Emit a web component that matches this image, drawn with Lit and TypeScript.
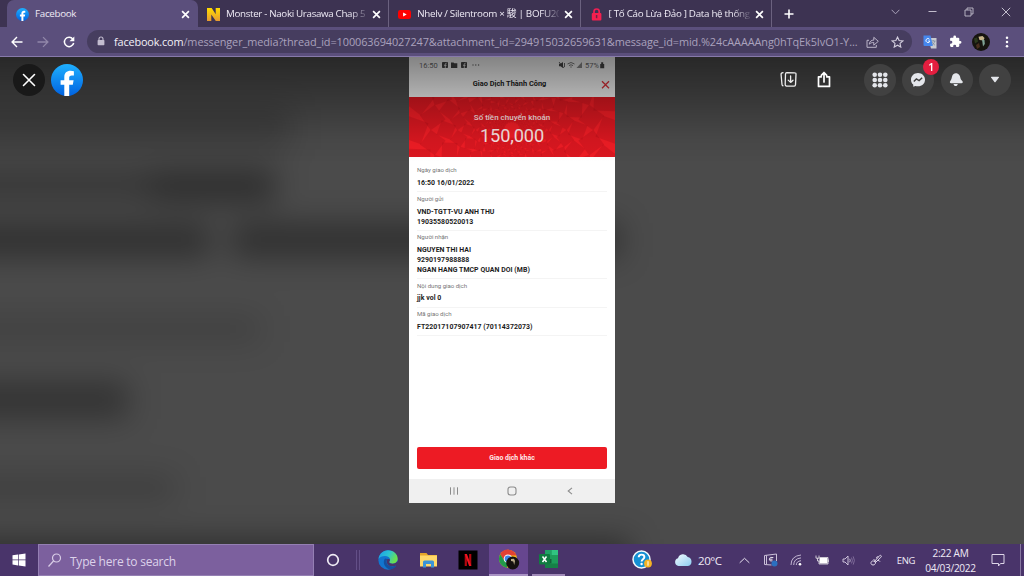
import { LitElement, html, css, svg } from "lit";
import { customElement } from "lit/decorators.js";

const fbLogo = (id: string) => html`<svg class="fill" viewBox="0 0 32 32">
  <defs><linearGradient id=${id} x1="0" y1="0" x2="0" y2="1"><stop offset="0" stop-color="#1fb0ff"/><stop offset="1" stop-color="#0062e0"/></linearGradient></defs>
  <circle cx="16" cy="16" r="16" fill="url(#${id})"/>
  <path fill="#fff" d="M13.3 32V20.8H9.6v-4.6h3.7v-3.1c0-4.2 2.5-6.3 6.2-6.3 1.3 0 2.6.2 3.4.4v4.2h-2.1c-2 0-2.6 1-2.6 2.2v2.6h4.4l-.8 4.6h-3.6V32z"/>
</svg>`;

const cross = html`<svg class="cross" viewBox="0 0 8 8"><path d="M1 1l6 6M7 1l-6 6" stroke="#fff" stroke-width="1.5"/></svg>`;

@customElement("browser-chrome")
export class BrowserChrome extends LitElement {
  static styles = css`
    :host { display: block; font-family: "Open Sans", "Noto Sans CJK JP", sans-serif; color: #eeeaf5; }
    svg { display: block; flex: none; }
    .strip { display: flex; height: 27px; background: #3d3352; padding-left: 7px; box-sizing: border-box; }
    .tab { position: relative; box-sizing: border-box; display: flex; align-items: center; width: 191.3px; padding: 1px 7px 0 9px; flex: none; }
    .tab.active { background: #5b4f7c; border-radius: 7px 7px 0 0; width: 191px; padding-right: 8px; }
    .tab.line { border-right: 1px solid #6b617f; }
    .fav { width: 13px; height: 13px; flex: none; }
    .fill { width: 100%; height: 100%; }
    .title { flex: 1; margin: 0 5px 0 6px; overflow: hidden; white-space: nowrap; font-size: 9.8px; line-height: 16px; letter-spacing: -0.3px; }
    .title.tight { letter-spacing: -0.34px; }
    .title.snug { letter-spacing: -0.3px; }
    .title.fade { mask-image: linear-gradient(90deg, #000 88%, rgba(0,0,0,.15) 100%); }
    .cross { width: 9px; height: 9px; }
    .plus { width: 10px; margin-left: 12px; align-self: center; }
    .win { display: grid; grid-template-columns: 37px 37px 36px 37px; margin-left: auto; place-items: center; padding: 0 0 4px; }
    .bar { display: flex; align-items: center; height: 30px; background: #5b4f7c; border-bottom: 1px solid #877aaa; box-sizing: border-box; }
    .nav { display: grid; grid-template-columns: 26px 26px 26px; place-items: center; padding-left: 4px; }
    .url { margin-left: 5px; width: 825px; height: 23px; border-radius: 12px; background: #463d5f; display: flex; align-items: center; box-sizing: border-box; padding: 0 0 0 9px; }
    .addr { margin-left: 8px; width: 748px; flex: none; white-space: nowrap; font-size: 10.9px; line-height: 20px; color: #aaa2bd; letter-spacing: -0.077px; }
    .addr b { color: #f3f1f8; font-weight: 400; letter-spacing: -0.15px; }
    .acts { display: grid; grid-template-columns: 25px 25px; place-items: center; margin-left: -2px; flex: none; }
    .ext { display: grid; grid-template-columns: 25px 26px 26px 25px; place-items: center; margin-left: 5px; }
  `;
  render() {
    return html`
      <div class="strip">
        <div class="tab active"><div class="fav">${fbLogo("g1")}</div><div class="title">Facebook</div>${cross}</div>
        <div class="tab line">
          <svg class="fav" viewBox="0 0 13 13"><defs><linearGradient id="n" x1="0" y1="0" x2="0" y2="1"><stop offset="0" stop-color="#ffdc00"/><stop offset="1" stop-color="#e69a32"/></linearGradient></defs><path fill="url(#n)" d="M0 0h4.7l4 6.2V0H13v13H8.8L4.3 6.5V13H0z"/></svg>
          <div class="title tight fade">Monster - Naoki Urasawa Chap 5</div>${cross}
        </div>
        <div class="tab line">
          <svg class="fav" viewBox="0 0 13 13"><rect y="2" width="13" height="9" rx="2.3" fill="#f00"/><path d="M5.1 4.4l3.6 2.1-3.6 2.1z" fill="#fff"/></svg>
          <div class="title snug fade">Nhelv / Silentroom × 駿 | BOFU20</div>${cross}
        </div>
        <div class="tab line">
          <svg class="fav" viewBox="0 0 13 13"><path d="M4 6V3.6a2.6 2.6 0 0 1 5.2 0V6" fill="none" stroke="#ef1f53" stroke-width="1.7"/><rect x="1.8" y="5" width="9.6" height="7.6" rx="1" fill="#f4204f"/><path d="M6.6 7v3.2" stroke="#6d2346" stroke-width="1.5"/></svg>
          <div class="title fade">[ Tố Cáo Lừa Đảo ] Data hệ thống</div>${cross}
        </div>
        <svg class="plus" viewBox="0 0 10 10"><path d="M5 .5v9M.5 5h9" stroke="#fff" stroke-width="1.6"/></svg>
        <div class="win">
          <svg width="9" height="6" viewBox="0 0 9 6"><path d="M.6.8l3.9 4 3.9-4" fill="none" stroke="#aaa3ba"/></svg>
          <svg width="9" height="3" viewBox="0 0 9 3"><path d="M.5 1.5h8" stroke="#c2bdcc"/></svg>
          <svg width="10" height="10" viewBox="0 0 10 10"><path d="M1 3h6v6H1zM3 3V1h6v6H7" fill="none" stroke="#c2bdcc" stroke-width=".9"/></svg>
          <svg width="10" height="10" viewBox="0 0 10 10"><path d="M.8.8l8.4 8.4M9.2.8L.8 9.2" stroke="#d3cfdc" stroke-width=".9"/></svg>
        </div>
      </div>
      <div class="bar">
        <div class="nav">
          <svg width="12" height="12" viewBox="0 0 12 12"><path d="M11.5 6H1.2M6 1.1L1.1 6 6 10.9" fill="none" stroke="#fff" stroke-width="1.4"/></svg>
          <svg width="12" height="12" viewBox="0 0 12 12"><path d="M.5 6h10.3M6 1.1L10.9 6 6 10.9" fill="none" stroke="#9187a9" stroke-width="1.3"/></svg>
          <svg width="12" height="12" viewBox="0 0 12 12"><path d="M9.9 3.1A4.7 4.7 0 1 0 10.7 7" fill="none" stroke="#fff" stroke-width="1.5"/><path d="M11.3.4v4.8H6.5z" fill="#fff"/></svg>
        </div>
        <div class="url">
          <svg width="10" height="11" viewBox="0 0 10 11"><path d="M3 4.5V3a2 2 0 0 1 4 0v1.5" fill="none" stroke="#c3bdd0" stroke-width="1.1"/><rect x="1.6" y="4" width="6.8" height="5.3" rx=".7" fill="#c3bdd0"/></svg>
          <div class="addr"><b>facebook.com</b>/messenger_media?thread_id=100063694027247&amp;attachment_id=294915032659631&amp;message_id=mid.%24cAAAAAng0hTqEk5IvO1-Y...</div>
          <div class="acts">
            <svg width="13" height="12" viewBox="0 0 13 12"><path d="M3 4.3H1v7h9.3V9M3.2 8.2c.4-3 2.3-4.1 4.6-4.1V1.3l4.5 4-4.5 3.9V6.5c-2 0-3.4.4-4.6 1.7z" fill="none" stroke="#bbb4c9"/></svg>
            <svg width="13" height="12" viewBox="0 0 13 12"><path d="M6.5 1.1l1.6 3.5 3.7.4L9 7.4l.8 3.7-3.3-1.9-3.3 1.9L4 7.4 1.2 5l3.7-.4z" fill="none" stroke="#d2cddd" stroke-width="1.1"/></svg>
          </div>
        </div>
        <div class="ext">
          <svg width="14" height="14" viewBox="0 0 14 14"><path d="M5 3h8.5v10.5H8z" fill="#c9cbd0"/><path d="M7.8 6h4.8M10.2 5v1M11.8 6c-.4 2-1.5 3.2-3 4M9 7c.6 1.3 1.7 2.5 3 3.2" stroke="#74849b" stroke-width=".7" fill="none"/><path d="M.5.5h7L9.8 11H1.5a1 1 0 0 1-1-1z" fill="#4687ee"/><path d="M6.5 4.3A2 2 0 1 0 6.9 6H5.1" fill="none" stroke="#fff" stroke-width=".9"/></svg>
          <svg width="13" height="13" viewBox="0 0 24 24"><path fill="#fff" d="M20.5 11H19V7a2 2 0 0 0-2-2h-4V3.5a2.5 2.5 0 0 0-5 0V5H4a2 2 0 0 0-2 2v3.800h1.500a2.700 2.700 0 0 1 0 5.400H2V20c0 1.100.9 2 2 2h3.800v-1.500a2.700 2.700 0 0 1 5.400 0V22H17a2 2 0 0 0 2-2v-4h1.500a2.500 2.500 0 0 0 0-5z"/></svg>
          <svg width="18" height="18" viewBox="0 0 18 18"><circle cx="9" cy="9" r="9" fill="#16140f"/><path d="M2 5.500l3-1 1 4-3 2z" fill="#2c3a1e"/><path d="M6.500 3.800l4-.8 2 2-1 2.500-4-.5z" fill="#c7b58b"/><path d="M10 6.500l2.500.5.300 4-1.800 2.500z" fill="#7fa294"/><path d="M4 12l3-2 1 4-3 2z" fill="#4a2f1f"/></svg>
          <svg width="4" height="12" viewBox="0 0 4 12"><g fill="#fff"><circle cx="2" cy="1.700" r="1.250"/><circle cx="2" cy="6" r="1.250"/><circle cx="2" cy="10.300" r="1.250"/></g></svg>
        </div>
      </div>`;
  }
}

const lattice = (() => {
  const out = [];
  const n = 20;
  let r = 9;
  for (let ring = 0; r < 100; ring++) {
    const s = r * 0.112 + 0.2;
    for (let i = 0; i < n; i++) {
      const a = ((i + (ring % 2) / 2) / n) * 360;
      out.push(svg`<rect x=${-s} y=${-s} width=${s * 2} height=${s * 2} transform="translate(103 33) rotate(${a}) translate(${r} 0) rotate(${ring % 2 ? 45 : 20})"/>`);
    }
    r *= 1.22;
  }
  return out;
})();

const entries: { label: string; lines: string[] }[] = [
  { label: "Ngày giao dịch", lines: ["16:50 16/01/2022"] },
  { label: "Người gửi", lines: ["VND-TGTT-VU ANH THU", "19035580520013"] },
  { label: "Người nhận", lines: ["NGUYEN THI HAI", "9290197988888", "NGAN HANG TMCP QUAN DOI (MB)"] },
  { label: "Nội dung giao dịch", lines: ["jjk vol 0"] },
  { label: "Mã giao dịch", lines: ["FT22017107907417 (70114372073)"] },
];

@customElement("bank-receipt")
export class BankReceipt extends LitElement {
  static styles = css`
    :host { display: flex; flex-direction: column; width: 206px; height: 446px; background: #fff; font-family: Roboto, sans-serif; color: #1c1c1c; }
    svg { display: block; }
    .head { height: 40px; background: #f3f3f3; box-sizing: border-box; padding: 3px 5px 0 10px; flex: none; }
    .status { display: flex; align-items: center; height: 10px; font-size: 7.5px; color: #666; padding-right: 5px; }
    .status .l { margin-left: 3px; }
    .status .r { margin-left: auto; margin-right: 1px; }
    .bar { display: grid; grid-template-columns: 1fr 9px; align-items: center; margin-top: 4px; height: 20px; }
    .name { text-align: center; font-size: 7.4px; font-weight: 700; padding: 0 1px 1px 0; }
    .hero { display: grid; height: 60px; background: #f01d25; flex: none; overflow: hidden; }
    .hero > * { grid-area: 1 / 1; }
    .sum { display: flex; flex-direction: column; align-items: center; color: #fbe3e3; }
    .cap { font-size: 8px; line-height: 10px; font-weight: 500; margin-top: 16px; }
    .num { font-size: 18.2px; line-height: 22px; margin-top: 2px; letter-spacing: -0.1px; }
    .list { padding: 8.2px 8px 0; flex: 1; }
    .entry { border-bottom: 1px solid #f4f4f4; padding-bottom: 3.2px; margin-bottom: 1.4px; }
    .label { font-size: 6.1px; line-height: 10px; height: 12.9px; color: #757575; letter-spacing: -0.03px; }
    .val { font-size: 6.95px; line-height: 10px; font-weight: 700; white-space: nowrap; letter-spacing: 0.04px; }
    .btn { margin: 0 8px; height: 22px; border-radius: 2px; background: #ed1b24; color: #ffe9ea; font-size: 6.9px; font-weight: 700; display: grid; place-items: center; flex: none; }
    .keys { margin-top: 10px; height: 24px; background: #f0f0f0; display: grid; grid-template-columns: 57px 58px 58px; place-items: center; justify-content: center; flex: none; }
  `;
  render() {
    return html`
      <div class="head">
        <div class="status"><span>16:50</span>
          <svg class="l" width="42" height="8" viewBox="0 0 42 8"><g fill="#444"><rect x="1" y="1" width="6" height="6" rx=".8"/><path d="M10 1.500h2.500l.8.8h3V7H10z"/><rect x="20" y="1" width="6" height="6" rx=".8"/></g><path d="M4.300 7V3.200q0-1 1.300-1M3 4.300h2.600M23.300 7V3.200q0-1 1.300-1M22 4.300h2.600" stroke="#eee" stroke-width=".8" fill="none"/><g fill="#666"><circle cx="32" cy="4" r=".7"/><circle cx="34.800" cy="4" r=".7"/><circle cx="37.600" cy="4" r=".7"/></g></svg>
          <svg class="r" width="26" height="8" viewBox="0 0 26 8"><path d="M1 2.800h1.500L5 1v6L2.500 5.200H1z" fill="#444"/><path d="M1 1l5 6M6.500 2v4" stroke="#444" stroke-width=".8"/><path d="M9.500 3q3.500-3 7 0M11 4.600q2-1.700 4 0M12.300 6h1.400" stroke="#777" stroke-width="1" fill="none"/><path d="M18.500 7h5.500V1z" fill="#888"/></svg>
          <span>57%</span><svg width="6" height="8" viewBox="0 0 6 8"><path d="M1.200 3h4v4.200h-4zM2.200 3V1.300h2V3" fill="#444"/></svg>
        </div>
        <div class="bar"><div class="name">Giao Dịch Thành Công</div><svg width="9" height="9" viewBox="0 0 9 9"><path d="M1 1.300l7 7M8 1.300l-7 7" stroke="#e0303a" stroke-width="1.300"/></svg></div>
      </div>
      <div class="hero">
        <svg width="206" height="60" viewBox="0 0 206 60"><g fill="#a50c17" fill-opacity=".28">${lattice}</g></svg>
        <div class="sum"><div class="cap">Số tiền chuyển khoản</div><div class="num">150,000</div></div>
      </div>
      <div class="list">${entries.map((e) => html`<div class="entry"><div class="label">${e.label}</div>${e.lines.map((l) => html`<div class="val">${l}</div>`)}</div>`)}</div>
      <div class="btn">Giao dịch khác</div>
      <div class="keys">
        <svg width="10" height="8" viewBox="0 0 10 8"><path d="M1.500.3v7.400M5 .3v7.400M8.500.3v7.400" stroke="#8c8c8c"/></svg>
        <svg width="10" height="10" viewBox="0 0 10 10"><rect x="1" y="1" width="8" height="8" rx="2.500" fill="none" stroke="#8c8c8c" stroke-width="1.100"/></svg>
        <svg width="6" height="8" viewBox="0 0 6 8"><path d="M5 .8L1.200 4 5 7.200" fill="none" stroke="#8c8c8c" stroke-width="1.100"/></svg>
      </div>`;
  }
}

@customElement("media-viewer")
export class MediaViewer extends LitElement {
  static styles = css`
    :host { display: grid; height: 487px; background: #4b4b4b; overflow: hidden; }
    :host > * { grid-area: 1 / 1; min-width: 0; min-height: 0; }
    svg { display: block; }
    .phone { justify-self: start; margin-left: 409px; }
    .shade { background: linear-gradient(180deg, rgba(0,0,0,.46) 0, rgba(0,0,0,.27) 40px, rgba(0,0,0,.05) 82px, transparent 105px); z-index: 1; }
    .tools { z-index: 2; display: flex; align-items: center; height: 32px; margin: 6.5px 13px 0; }
    .disc { position: relative; width: 32px; height: 32px; border-radius: 50%; background: #414141; display: grid; place-items: center; margin-left: 6.4px; }
    .disc.dark { background: #191919; margin: 0 6px 0 0; }
    .logo { width: 32px; height: 32px; }
    .fill { width: 32px; height: 32px; }
    .right { display: flex; align-items: center; margin-left: auto; }
    .share { margin: 0 26px 0 20px; }
    .dot { position: absolute; right: -5px; top: -5px; width: 16px; height: 16px; border-radius: 50%; background: #e41e3f; color: #fff; font: 600 10.5px/16px "Open Sans", sans-serif; text-align: center; }
  `;
  render() {
    return html`
      <svg width="1024" height="487" viewBox="0 0 1024 487">
        <defs><filter id="soft" filterUnits="userSpaceOnUse" x="-60" y="-60" width="1100" height="620" color-interpolation-filters="sRGB"><feGaussianBlur stdDeviation="15"/></filter></defs>
        <g filter="url(#soft)" fill="#000">
          <rect x="-50" y="50" width="340" height="42" opacity=".16"/>
          <rect x="-50" y="112" width="200" height="32" opacity=".26"/><rect x="150" y="112" width="125" height="34" opacity=".38"/>
          <rect x="-50" y="166" width="260" height="34" opacity=".36"/><rect x="232" y="166" width="388" height="34" opacity=".36"/>
          <rect x="-50" y="258" width="310" height="28" opacity=".13"/>
          <rect x="-50" y="324" width="178" height="38" opacity=".31"/>
          <rect x="-50" y="418" width="225" height="26" opacity=".16"/>
          <rect x="-50" y="482" width="680" height="40" opacity=".38"/>
        </g>
      </svg>
      <bank-receipt class="phone"></bank-receipt>
      <div class="shade"></div>
      <div class="tools">
        <div class="disc dark"><svg width="14" height="14" viewBox="0 0 14 14"><path d="M1.500 1.500l11 11M12.500 1.500l-11 11" stroke="#fff" stroke-width="1.600" stroke-linecap="round"/></svg></div>
        <div class="logo">${fbLogo("g2")}</div>
        <div class="right">
          <svg width="17" height="17" viewBox="0 0 17 17"><g fill="none" stroke="#eee" stroke-width="1.300" stroke-linecap="round" stroke-linejoin="round"><path d="M6.800 1.600l8 .2q1.300 0 1.200 1.400l-.5 10.600q-.1 1.400-1.500 1.300l-7.600-.1q-1.300-.1-1.200-1.500L5.500 3Q5.600 1.600 6.800 1.600zM3 1.700Q.9 1.900 1.100 3.700L2 13.500q.1 1 1 1.300M10.600 5v6.300M8.200 9.100l2.400 2.300L13 9.200"/></g></svg>
          <svg class="share" width="14" height="17" viewBox="0 0 14 17"><path d="M4.300 5.800H1.500v9.600h11V5.800H9.700M7 11V1.700M4.300 4.300L7 1.500l2.700 2.800" fill="none" stroke="#fff" stroke-width="1.700" stroke-linejoin="round" stroke-linecap="round"/></svg>
          <div class="disc"><svg width="16" height="16" viewBox="0 0 16 16"><g fill="#e4e6eb">${[2.7, 8, 13.3].map((y) => [2.7, 8, 13.3].map((x) => svg`<circle cx=${x} cy=${y} r="2.300"/>`))}</g></svg></div>
          <div class="disc"><svg width="16" height="16" viewBox="0 0 16 16"><path fill="#e4e6eb" d="M8 1C4 1 1 3.900 1 7.700c0 2 .8 3.700 2.200 4.900l.1 2.200 2-.9c.9.300 1.700.4 2.700.4 4 0 7-2.800 7-6.600S12 1 8 1z"/><path d="M3.800 9.600l2.600-2.700 2.700 1.700 3.100-2.900" fill="none" stroke="#414141" stroke-width="1.400"/></svg><div class="dot">1</div></div>
          <div class="disc"><svg width="15" height="15" viewBox="0 0 15 15"><path fill="#e4e6eb" d="M3.300 3.800C4 1.700 5.800.7 7.800 1.300c2.200.7 3.300 2.300 3.500 4.300.2 1.600 1 2.300 2 3.400.9 1.100.5 2.300-.8 2.300L2.200 11.200c-1.400 0-1.700-1.300-.9-2.200C2.700 7.300 2.600 5.700 3.300 3.800zM4.500 12h4.300c-.2 1.300-1 2.100-2.100 2.100S4.700 13.300 4.500 12z"/></svg></div>
          <div class="disc"><svg width="10" height="7" viewBox="0 0 10 7"><path fill="#e4e6eb" d="M1.500.7h7q.7.2.4.9L5.600 6q-.6.500-1.200 0L1.100 1.600Q.8.900 1.500.7z"/></svg></div>
        </div>
      </div>`;
  }
}

@customElement("task-bar")
export class TaskBar extends LitElement {
  static styles = css`
    :host { display: flex; height: 32px; background: #49346a; color: #efeaf6; font-family: "Open Sans", sans-serif; }
    svg { display: block; }
    .cell { display: grid; place-items: center; height: 32px; box-sizing: border-box; flex: none; white-space: nowrap; }
    .w38 { width: 38px; }
    .w26 { width: 26px; }
    .pen { width: 30px; }
    .search { width: 276px; height: 32px; box-sizing: border-box; background: #7c609e; border: 1px solid #947fb3; display: flex; align-items: center; padding-left: 8px; gap: 7px; font-size: 12px; color: #ddd2ea; flex: none; }
    .search span { padding-top: 2px; letter-spacing: -0.24px; }
    .rule { width: 11px; }
    .apps { display: grid; grid-template-columns: 40px 40px 40px; margin-left: 5px; flex: none; }
    .chrome { width: 39px; background: #66468f; border-bottom: 2px solid #a993c4; margin-left: 1px; }
    .excel { width: 33px; margin-left: 4px; border-bottom: 2px solid #a18bb9; }
    .help { margin-left: 58px; }
    .cloud { margin-left: 3px; }
    .temp { width: 33px; font-size: 11.5px; padding-top: 1px; letter-spacing: -0.45px; margin-left: -4px; justify-items: start; }
    .eng { width: 30px; font-size: 9.5px; letter-spacing: -0.35px; }
    .clock { width: 59px; text-align: center; font-size: 10.1px; line-height: 14.5px; letter-spacing: -0.3px; padding-top: 2px; flex: none; }
    .note { width: 35px; }
    .edge { margin-left: 5px; width: 1px; background: #8878a1; }
  `;
  render() {
    return html`
      <div class="cell w38"><svg width="14" height="14" viewBox="0 0 14 14"><path fill="#fff" d="M.5 2.300L6 1.500v5.100H.5zM6.700 1.400L13.500.5v6.100H6.700zM.5 7.300H6v5.100l-5.500-.8zM6.700 7.300h6.800v6.200l-6.800-1z"/></svg></div>
      <div class="search"><svg width="16" height="15" viewBox="0 0 16 15"><circle cx="9.500" cy="5" r="4" fill="none" stroke="#d9cde7" stroke-width="1.200"/><path d="M6.500 8L1.500 13.500" stroke="#d9cde7" stroke-width="1.200"/></svg><span>Type here to search</span></div>
      <div class="cell w38"><svg width="14" height="14" viewBox="0 0 14 14"><circle cx="7" cy="7" r="5.300" fill="none" stroke="#f0ecf5" stroke-width="1.700"/></svg></div>
      <div class="cell rule"><svg width="4" height="20" viewBox="0 0 4 20"><path d="M.5 0v20M3.500 0v20" stroke="#66528a" stroke-width=".9"/></svg></div>
      <div class="apps">
        <div class="cell"><svg width="20" height="20" viewBox="0 0 20 20"><defs><linearGradient id="e1" x1="0" y1="0" x2="1" y2=".4"><stop offset="0" stop-color="#1c9be8"/><stop offset=".55" stop-color="#2bc3d2"/><stop offset="1" stop-color="#6be04e"/></linearGradient></defs><circle cx="10" cy="10" r="9.700" fill="#1275cf"/><path d="M.5 9C1.200 3.800 5 .3 10 .3c6 0 9.700 4.200 9.700 8.500 0 3-2.200 4.900-5 4.900-2.200 0-3.500-.8-3.500-1.700 0-.7.9-.9.9-2.500C12 7.300 9.800 5.900 7 5.900 4 5.900 1.500 7 .5 9z" fill="url(#e1)"/><path d="M7 8.500c-2.500 3-1 8.500 4 10.800 3 .6 6.200-1.300 7.600-4-3 2-8.800 1.500-10-2.300-.4-1.500 0-3 .8-4.100z" fill="#1351a0"/><path d="M12 9.500c0 1.500-.8 1.800-.8 2.500 0 .9 1.300 1.700 3.500 1.700 2 0 3.700-1 4.500-2.500l1 2.500-1.700 1.900c-3.800 1.600-8.900.7-9.700-2.900-.3-1.500 0-2.800.8-3.900z" fill="#49346a"/></svg></div>
        <div class="cell"><svg width="19" height="16" viewBox="0 0 19 16"><path d="M1 1h6.500l1.500 2H18v11H1z" fill="#e5a52a"/><path d="M1 3.500h17V14.500H1z" fill="#ffd869"/><path d="M4 15.500V10q0-1.500 1.500-1.500h8q1.500 0 1.500 1.500v5.500h-3V12H7v3.500z" fill="#3c93d8"/></svg></div>
        <div class="cell"><svg width="20" height="20" viewBox="0 0 20 20"><path d="M.5.5h19v19H.5z" fill="#000"/><path d="M6.700 4h2.200v12H6.700zM11.100 4h2.200v12h-2.200z" fill="#b20710"/><path d="M6.700 4h2.200l4.400 12h-2.200z" fill="#ee1520"/></svg></div>
      </div>
      <div class="cell chrome"><svg width="22" height="21" viewBox="0 0 22 21"><circle cx="10" cy="9.700" r="9" fill="#fbc116"/><path d="M2.200 5.200A9 9 0 0 1 18.500 6.500H10L6.200 12z" fill="#e34133"/><path d="M2.200 5.200L6.500 12l3.700 2-1.300 4.700A9 9 0 0 1 2.200 5.200z" fill="#219a4b"/><circle cx="10" cy="9.700" r="4.300" fill="#fff"/><circle cx="10" cy="9.700" r="3.300" fill="#4285e8"/><circle cx="14.700" cy="14" r="6.500" fill="#15120f"/><path d="M13 10l3-.2 1 2.200-.8 4-.9-3.500-2.300-.4z" fill="#bcae8b"/></svg></div>
      <div class="cell excel"><svg width="20" height="20" viewBox="0 0 20 20"><path d="M6 1h13v18H6z" fill="#1d9c5a"/><path d="M12.500 1H19v5h-6.500z" fill="#31c481"/><path d="M6 1h6.500v5H6z" fill="#20a265"/><path d="M6 10h6.500v4.500H6z" fill="#14603a"/><path d="M6 14.500h13V19H6z" fill="#168047"/><rect y="5" width="11" height="10.500" rx="1" fill="#107c41"/><path d="M3.500 7.500l4 5.500M7.500 7.500l-4 5.500" stroke="#fff" stroke-width="1.500"/></svg></div>
      <div class="cell w38 help"><svg width="20" height="20" viewBox="0 0 20 20"><circle cx="9.500" cy="9.500" r="8.500" fill="#1590d3" stroke="#f3fafc" stroke-width="1.500"/><path d="M6.700 7.300C6.700 5.500 8 4.600 9.600 4.600s2.800 1 2.800 2.500c0 2-2.800 2.200-2.800 4.300" fill="none" stroke="#fff" stroke-width="1.900"/><circle cx="9.600" cy="14" r="1.200" fill="#fff"/><circle cx="16" cy="13.500" r="3.900" fill="#f5b324"/><path d="M16 11.200v4.500" stroke="#fff"/></svg></div>
      <div class="cell w38 cloud"><svg width="19" height="14" viewBox="0 0 19 14"><defs><linearGradient id="c" x1="0" y1="0" x2="1" y2="1"><stop offset="0" stop-color="#f4fcff"/><stop offset="1" stop-color="#8ccdf0"/></linearGradient></defs><path fill="url(#c)" d="M4.500 13A4 4 0 0 1 4 5.200 5.200 5.200 0 0 1 13.700 4 4.600 4.600 0 0 1 14 13z"/></svg></div>
      <div class="cell temp">20°C</div>
      <div class="cell w26"><svg width="11" height="7" viewBox="0 0 11 7"><path d="M.7 5.800l4.800-4.500 4.800 4.500" fill="none" stroke="#e6e0ee"/></svg></div>
      <div class="cell w26"><svg width="15" height="14" viewBox="0 0 15 14"><path d="M8.500 12L1.500 11.500V2.500L13.500 1v7M3.500 2.300v9" fill="none" stroke="#cbc0d9"/><path d="M10.300 4.500Q6.500 3.500 6.300 6.200q.2 2.500 3.300 1.700M6.500 6.200h3" fill="none" stroke="#e6e0ee"/><circle cx="11.500" cy="10.500" r="3" fill="#2b6fc0"/></svg></div>
      <div class="cell w26"><svg width="12" height="12" viewBox="0 0 12 12"><g fill="none" stroke="#c1b5d1"><path d="M1 11Q1 2 11 1"/><path d="M3.700 11Q3.700 4.700 11 3.900"/><path d="M6.300 11Q6.300 7.300 11 6.700"/></g><circle cx="10" cy="10.300" r="1.300" fill="#fff"/></svg></div>
      <div class="cell w26"><svg width="14" height="10" viewBox="0 0 14 10"><path d="M4.500 3h8v5.500h-8z" fill="#fff"/><path d="M13.300 4.500v2.500M1 .5v2.700h3V.5M2.500 3.200V6h2M4.500 2.500H13v6.500H4V6" fill="none" stroke="#eee" stroke-width=".8"/></svg></div>
      <div class="cell w26"><svg width="13" height="11" viewBox="0 0 13 11"><path d="M1 4h2l3-3v9L3 7H1z" fill="none" stroke="#d9d0e5" stroke-width=".9"/><path d="M7.700 3.800q1 1.700 0 3.400" fill="none" stroke="#d9d0e5" stroke-width=".8"/><path d="M9.500 2.600q1.800 2.900 0 5.800M11.200 1.400q2.400 4.100 0 8.200" fill="none" stroke="#8d7aa6" stroke-width=".8"/></svg></div>
      <div class="cell pen"><svg width="12" height="12" viewBox="0 0 12 12"><path d="M4 8l5.500-6.300q1-.8 1.700.1.400.9-.4 1.600L5 9M4.200 7.600C3 6 .6 7.500 1 9.500s3.500 2 4.300.2C6 7.500 4.500 6 3.500 5M7 4.500C5.500 3.500 7.500 2 8.500 3M7 6.500q2.500-.5 3 1.200" fill="none" stroke="#ded6e8" stroke-width="1"/></svg></div>
      <div class="cell eng">ENG</div>
      <div class="clock">2:22 AM<br>04/03/2022</div>
      <div class="cell note"><svg width="14" height="14" viewBox="0 0 14 14"><path d="M1 1.500h12v9H9.500L7.500 13V10.500H1z" fill="none" stroke="#ded6e8"/></svg></div>
      <div class="edge"></div>`;
  }
}

@customElement("app-root")
export class AppRoot extends LitElement {
  static styles = css`:host { display: flex; flex-direction: column; width: 1024px; height: 576px; overflow: hidden; }`;
  render() {
    return html`<browser-chrome></browser-chrome><media-viewer></media-viewer><task-bar></task-bar>`;
  }
}
